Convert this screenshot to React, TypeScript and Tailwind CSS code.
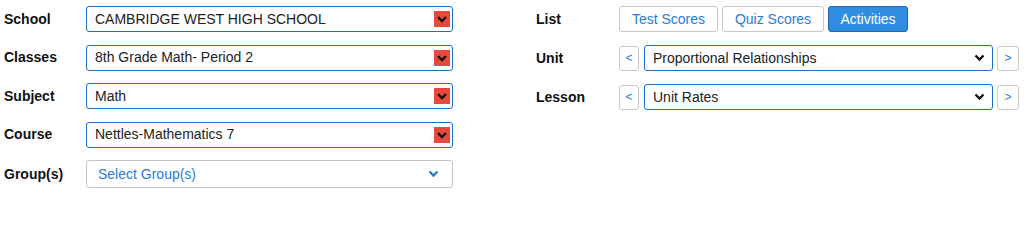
import React from 'react'

const font = { fontFamily: '"Liberation Sans", Arial, sans-serif' }

function RedChevron() {
  return (
    <span className="flex size-[16px] items-center justify-center bg-[#e8493b]">
      <svg width="12" height="12" viewBox="0 0 12 12">
        <path d="M2 4 L6 8 L10 4" fill="none" stroke="#111" strokeWidth="2.4" />
      </svg>
    </span>
  )
}

function Chevron({ color }: { color: string }) {
  return (
    <svg width="11" height="8" viewBox="0 0 11 8">
      <path d="M1.5 1.5 L5.5 5.5 L9.5 1.5" fill="none" stroke={color} strokeWidth="2.4" />
    </svg>
  )
}

function BlueSelect({ value }: { value: string }) {
  return (
    <div className="flex h-[26px] w-[367px] items-center justify-between rounded-[3px] border border-[#1b6ec2] pr-[2px] pl-[8px] text-[14px] text-[#222]">
      <span>{value}</span>
      <RedChevron />
    </div>
  )
}

function Field({ label, children }: { label: string; children: React.ReactNode }) {
  return (
    <div className="flex items-center">
      <span className="w-[82px] text-[14px] font-bold text-[#111]">{label}</span>
      {children}
    </div>
  )
}

function RightField({ label, children }: { label: string; children: React.ReactNode }) {
  return (
    <div className="flex items-center">
      <span className="w-[83px] text-[14px] font-bold text-[#111]">{label}</span>
      {children}
    </div>
  )
}

function NavButton({ children, wide }: { children: string; wide?: boolean }) {
  return (
    <button
      className={
        wide
          ? 'flex h-[25px] w-[22px] items-center justify-center rounded-[3px] border border-[#c8c8c8] bg-white text-[12px] text-[#2b7bd0]'
          : 'flex h-[25px] w-[20px] items-center justify-center rounded-[3px] border border-[#c8c8c8] bg-white text-[12px] text-[#2b7bd0]'
      }
    >
      {children}
    </button>
  )
}

function StepSelect({ value }: { value: string }) {
  return (
    <div className="flex items-center gap-[4px]">
      <NavButton>&lt;</NavButton>
      <div className="ml-[1px] flex h-[26px] w-[349px] items-center justify-between rounded-[3px] border border-[#1b6ec2] pr-[7px] pl-[8px] text-[14px] text-[#222]">
        <span>{value}</span>
        <Chevron color="#111" />
      </div>
      <NavButton wide>&gt;</NavButton>
    </div>
  )
}

export default function App() {
  return (
    <div className="flex h-[204px] w-[1027px] bg-white pt-[6px]" style={font}>
      <div className="flex w-[453px] flex-col gap-[12.5px] pl-[4px]">
        <Field label="School">
          <BlueSelect value="CAMBRIDGE WEST HIGH SCHOOL" />
        </Field>
        <Field label="Classes">
          <BlueSelect value="8th Grade Math- Period 2" />
        </Field>
        <Field label="Subject">
          <BlueSelect value="Math" />
        </Field>
        <Field label="Course">
          <BlueSelect value="Nettles-Mathematics 7" />
        </Field>
        <Field label="Group(s)">
          <div className="flex h-[28px] w-[367px] items-center justify-between rounded-[3px] border border-[#c4c4c4] pr-[13px] pl-[11px] text-[14px] text-[#2b7bd0]">
            <span>Select Group(s)</span>
            <Chevron color="#2b7bd0" />
          </div>
        </Field>
      </div>

      <div className="ml-[83px] flex flex-col gap-[13px]">
        <RightField label="List">
          <div className="flex gap-[4px]">
            <button className="h-[26px] w-[99px] rounded-[3px] border border-[#c8c8c8] bg-white text-[14px] text-[#2b7bd0]">
              Test Scores
            </button>
            <button className="h-[26px] w-[102px] rounded-[3px] border border-[#c8c8c8] bg-white text-[14px] text-[#2b7bd0]">
              Quiz Scores
            </button>
            <button className="h-[26px] w-[80px] rounded-[3px] border border-[#2368b0] bg-[#2f8ee2] text-[14px] text-white">
              Activities
            </button>
          </div>
        </RightField>
        <RightField label="Unit">
          <StepSelect value="Proportional Relationships" />
        </RightField>
        <RightField label="Lesson">
          <StepSelect value="Unit Rates" />
        </RightField>
      </div>
    </div>
  )
}
